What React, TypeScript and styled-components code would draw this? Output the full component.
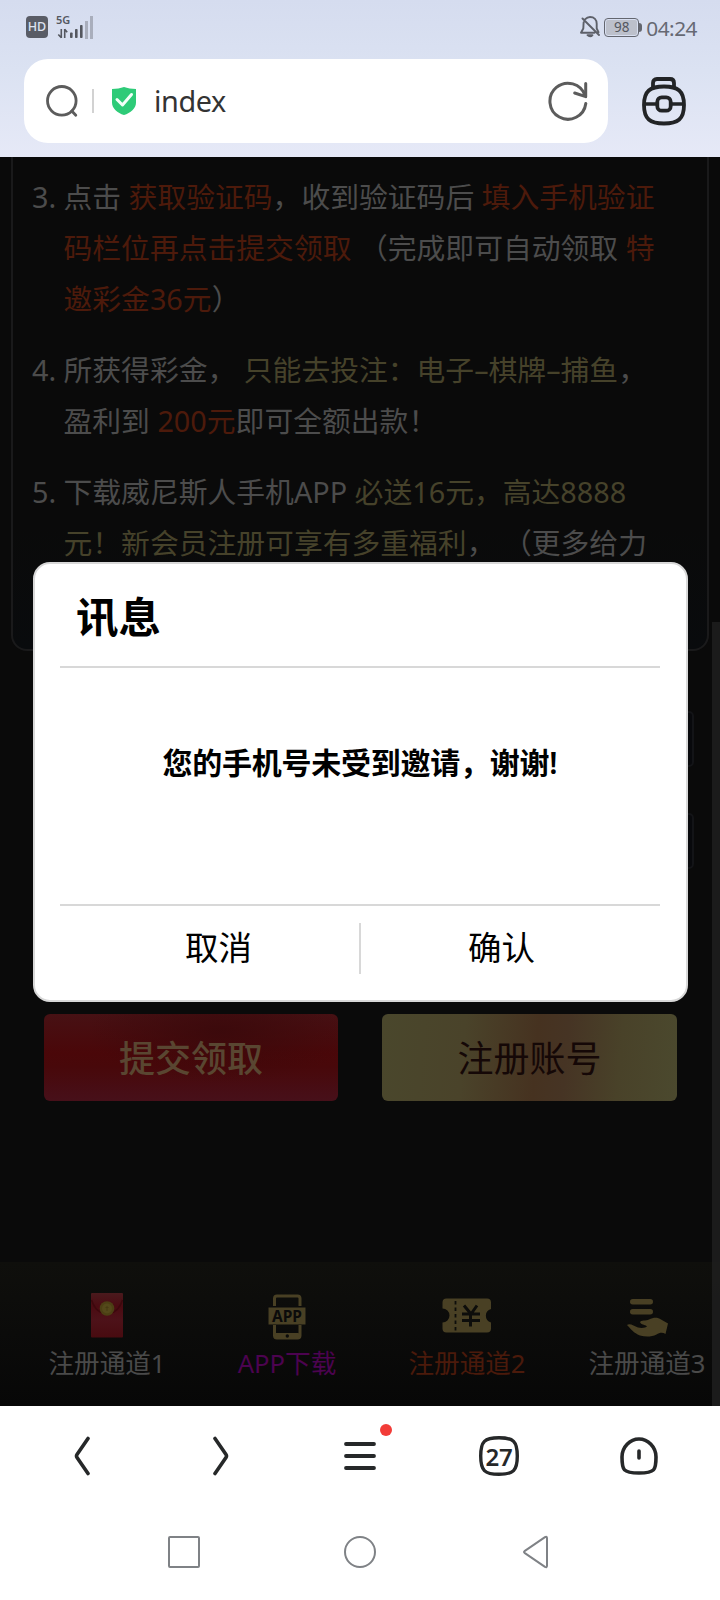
import React from "react";
import styled, { createGlobalStyle } from "styled-components";

const GlobalStyle = createGlobalStyle`
  * { box-sizing: border-box; }
  body {
    margin: 0;
    background: #fff;
    font-family: "Noto Sans", "Noto Sans CJK SC", sans-serif;
  }
  svg { display: block; flex: none; }
`;

const Phone = styled.div`
  position: relative;
  width: 720px;
  height: 1600px;
  overflow: hidden;
  display: flex;
  flex-direction: column;
  background: #fff;
`;

/* ---------- browser header ---------- */
const Header = styled.header`
  height: 157px;
  flex: none;
  background: linear-gradient(#d5dcef, #dbe2f2 45%, #e6e9f7);
`;

const StatusBar = styled.div`
  height: 59px;
  display: flex;
  align-items: center;
  justify-content: space-between;
  padding: 0 23px 5px 26px;
`;

const StatusGroup = styled.div<{ $gap: number }>`
  display: flex;
  align-items: center;
  gap: ${(p) => p.$gap}px;
`;

const HdBadge = styled.span`
  width: 22px;
  height: 22px;
  border-radius: 4px;
  background: #595c66;
  color: #dde3f2;
  font: 500 12.5px/22px "Noto Sans", sans-serif;
  text-align: center;
`;

const Signal = styled.div`
  display: flex;
  flex-direction: column;
  width: 38px;
  height: 25px;
`;

const SignalLabel = styled.span`
  font: 600 11px/10px "Noto Sans", sans-serif;
  color: #54575f;
  height: 10px;
`;

const Battery = styled.div`
  display: flex;
  align-items: center;
`;

const BatteryCell = styled.span`
  width: 35px;
  height: 19px;
  padding: 1px;
  border: 1.5px solid #63666f;
  border-radius: 4px;
  display: flex;
`;

const BatteryLevel = styled.span`
  flex: 1;
  border-radius: 2px;
  background: #bcc0cb;
  color: #54575f;
  font: 400 13.5px/14px "Noto Sans", sans-serif;
  text-align: center;
`;

const BatteryTip = styled.span`
  width: 3px;
  height: 9px;
  border-radius: 0 3px 3px 0;
  background: #63666f;
`;

const Clock = styled.span`
  font-size: 20.8px;
  letter-spacing: -0.5px;
  line-height: 24px;
  padding-top: 2px;
  color: #666973;
`;

const AddressRow = styled.div`
  display: flex;
  align-items: center;
  padding-left: 24px;
`;

const AddressBar = styled.div`
  width: 584px;
  height: 84px;
  border-radius: 24px;
  background: #fff;
  display: flex;
  align-items: center;
  padding: 0 19px 0 21px;
`;

const Separator = styled.span`
  width: 2px;
  height: 24px;
  margin: 0 17px 0 14px;
  background: #d2d2d2;
`;

const PageTitle = styled.span`
  flex: 1;
  margin-left: 17px;
  font-size: 28.8px;
  letter-spacing: -0.4px;
  line-height: 40px;
  color: #333;
`;

const BagButton = styled.button`
  margin-left: 33px;
  padding: 0;
  border: 0;
  background: none;
`;

/* ---------- dimmed page ---------- */
const Page = styled.main`
  position: relative;
  height: 1249px;
  flex: none;
  overflow: hidden;
  display: flex;
  flex-direction: column;
  background: #0a0a0a;
`;

const RulesCard = styled.section`
  height: 494px;
  flex: none;
  margin: 0 11px;
  padding: 14px 19px 0 19px;
  border: 2px solid #1a1a1b;
  border-top: 0;
  border-radius: 0 0 16px 16px;
  background: linear-gradient(#0a0a0a 75%, #090b0d);
`;

const Rule = styled.div`
  display: flex;
  margin-bottom: 20px;
  font-size: 28.8px;
  line-height: 51px;
  color: #4c4c4c;
  white-space: nowrap;
`;

const RuleNumber = styled.span`
  width: 31.5px;
  flex: none;
`;

const RuleLine = styled.div`
  height: 51px;
  white-space: pre;
`;

const Red = styled.span`
  color: #4d1a0b;
`;

const Khaki = styled.span`
  color: #46422a;
`;

const Field = styled.div`
  height: 56px;
  flex: none;
  margin: 60px 26px 0 200px;
  border: 2px solid #131417;
  border-radius: 5px;
  background: #08090c;

  & + & { margin-top: 46px; }
`;

const ActionRow = styled.div`
  display: flex;
  gap: 44px;
  margin: 145px 0 0 44px;
`;

const ActionButton = styled.button<{ $tone: "red" | "gold" }>`
  width: ${(p) => (p.$tone === "red" ? 294 : 295)}px;
  height: 87px;
  padding: 0;
  border: 0;
  border-radius: 6px;
  font-family: inherit;
  font-size: 36px;
  font-weight: ${(p) => (p.$tone === "red" ? 500 : 400)};
  line-height: 89px;
  color: ${(p) => (p.$tone === "red" ? "#594631" : "#150807")};
  background: ${(p) =>
    p.$tone === "red"
      ? "radial-gradient(ellipse 45% 60% at 60% 20%, rgba(58,9,11,.9), rgba(58,9,11,0)), linear-gradient(#471114, #4a0709 45%, #48080a 60%, #47101a)"
      : "linear-gradient(95deg, #4a472c 0%, #4a432a 28%, #463220 52%, #463424 62%, #494229 80%, #4b492e 100%)"};
`;

const TabBar = styled.nav`
  height: 144px;
  width: 720px;
  flex: none;
  margin-top: auto;
  padding-left: 17px;
  display: flex;
  background: linear-gradient(#0f0f0c, #0b0b0a 50%, #070707);
`;

const Tab = styled.div<{ $color: string }>`
  width: 180px;
  flex: none;
  display: flex;
  flex-direction: column;
  align-items: center;
  padding-top: 29px;
  font-size: 25.6px;
  line-height: 36px;
  color: ${(p) => p.$color};
  white-space: nowrap;
`;

const TabIcon = styled.span`
  height: 50px;
  margin-bottom: 5px;
`;

const ScrollThumb = styled.div`
  position: absolute;
  right: 0;
  top: 465px;
  width: 8px;
  height: 784px;
  background: rgba(30, 30, 30, 0.85);
`;

/* ---------- dialog ---------- */
const Dialog = styled.div`
  position: absolute;
  left: 33px;
  top: 562px;
  width: 655px;
  height: 440px;
  padding: 0 26px 0 25px;
  border: 2px solid #d8d8d8;
  border-radius: 17px;
  background: #fff;
  color: #000;
  display: flex;
  flex-direction: column;
`;

const DialogTitle = styled.h2`
  margin: 0;
  height: 104px;
  padding: 0 16px;
  border-bottom: 2px solid #d8d8d8;
  font-size: 42.5px;
  font-weight: 600;
  line-height: 106px;
`;

const DialogMessage = styled.p`
  margin: 0;
  height: 238px;
  border-bottom: 2px solid #d8d8d8;
  padding-top: 70px;
  font-size: 30px;
  font-weight: 600;
  line-height: 50px;
  letter-spacing: -0.25px;
  text-align: center;
`;

const DialogActions = styled.div`
  display: flex;
  align-items: center;
  height: 85px;
  padding: 0 18px;
`;

const DialogButton = styled.button`
  flex: 1;
  padding: 0 0 3px;
  border: 0;
  background: none;
  color: #000;
  font-family: inherit;
  font-size: 33.5px;
  line-height: 50px;
`;

const DialogDivider = styled.span`
  width: 2px;
  height: 51px;
  background: #d8d8d8;
`;

/* ---------- bottom bars ---------- */
const Toolbar = styled.nav`
  height: 100px;
  flex: none;
  display: flex;
  align-items: center;
  justify-content: center;
`;

const ToolButton = styled.span`
  position: relative;
  width: 139px;
  height: 100px;
  display: flex;
  align-items: center;
  justify-content: center;
`;

const AlertDot = styled.span`
  position: absolute;
  left: 89px;
  top: 18px;
  width: 12px;
  height: 12px;
  border-radius: 50%;
  background: #f23c38;
`;

const TabCount = styled.span`
  position: absolute;
  inset: 0;
  font-size: 24px;
  font-weight: 600;
  line-height: 102px;
  letter-spacing: -0.3px;
  text-align: center;
  color: #262829;
`;

const SystemNav = styled.nav`
  height: 94px;
  display: flex;
  justify-content: center;
  padding-top: 29px;
`;

const SystemKey = styled.span`
  width: 176px;
  display: flex;
  justify-content: center;
`;

const INK = "#262829";
const GOLD = "#494024";

const SignalBars = () => (
  <svg width="38" height="14" viewBox="0 0 38 14">
    <g stroke="#54575f" strokeWidth="1.6" fill="none">
      <path d="M5.3 4v9M2.3 9.5l3 3.2M8.7 13V4M8.7 4.2l2.5 3" />
    </g>
    <g fill="#54575f">
      <rect x="14" y="7.500" width="2.600" height="5.500" rx=".8" />
      <rect x="19" y="4" width="2.600" height="9" rx=".8" />
      <rect x="24" y="0" width="2.600" height="13" rx=".8" />
    </g>
  </svg>
);

const FaintBars = styled.span`
  align-self: flex-end;
  width: 8px;
  height: 23px;
  margin: 0 0 1px -17px;
  display: flex;
  align-items: flex-end;
  justify-content: space-between;

  i { width: 2.6px; background: #a9aebc; }
  i:first-child { height: 18px; }
  i:last-child { height: 23px; }
`;

const MutedBell = () => (
  <svg width="20" height="22" viewBox="0 0 20 22" fill="none" stroke="#5d6069" strokeWidth="1.9" strokeLinecap="round" strokeLinejoin="round">
    <path d="M5.300 3.200C7 1.300 8.500 1 10 1c4.200 0 6.700 2.900 6.700 6.800v4.700l1.800 3.700M3.700 6.200c-.3 2-.2 4.300-.4 6.300L1 16.700h13.500M2.500 2.500l16.500 16.500" />
    <path d="M7.500 19.200c1.600 1.600 3.600 1.600 5 0z" fill="#5d6069" />
  </svg>
);

const SearchIcon = () => (
  <svg width="33" height="34" viewBox="0 0 33 34" fill="none" stroke="#5c5c5c" strokeWidth="2.800" strokeLinecap="round">
    <circle cx="16.800" cy="16.800" r="14.300" />
    <path d="M26.800 27l4 4.300" />
  </svg>
);

const ShieldIcon = () => (
  <svg width="26" height="30" viewBox="0 0 26 30">
    <path d="M13 1c3.500 1.300 7.500 1.800 12 2v13.500C25 22.500 19.500 27 13 29 6.500 27 1 22.500 1 16.500V3c4.500-.2 8.500-.7 12-2z" fill="#2ecb78" />
    <path d="M6 13.500l5.500 5.500 9-10.500" fill="none" stroke="#f3fff8" strokeWidth="3" strokeLinecap="round" strokeLinejoin="round" />
  </svg>
);

const ReloadIcon = () => (
  <svg width="42" height="42" viewBox="0 0 42 42" fill="none" stroke="#5c5c5c" strokeWidth="3" strokeLinecap="round" strokeLinejoin="round">
    <path d="M38.800 23.500A18 18 0 1 1 38 15.500" />
    <path d="M38.700 3.500v13.200l-11-3.700" />
  </svg>
);

const BagIcon = () => (
  <svg width="46" height="50" viewBox="0 0 46 50" fill="none" stroke="#222426" strokeWidth="3.800">
    <path d="M12 12V7q0-4 4-4h13q4 0 4 4v5" />
    <path d="M23 10.500c14 0 20 4.500 20 18.500S37 47.500 23 47.500 3 43 3 29 9 10.500 23 10.500z" />
    <rect x="16.300" y="21.300" width="13.400" height="13.400" rx="4.500" />
    <path d="M3 28h13M30 28h13" strokeWidth="3.500" />
  </svg>
);

const EnvelopeIcon = () => (
  <svg width="34" height="50" viewBox="0 0 34 50">
    <defs>
      <linearGradient id="env" x1="0" y1="0" x2="0" y2="1">
        <stop offset="0" stopColor="#4a1a1d" />
        <stop offset=".3" stopColor="#4b0b12" />
        <stop offset=".6" stopColor="#4d1219" />
        <stop offset="1" stopColor="#480b10" />
      </linearGradient>
    </defs>
    <rect x="1" y="2" width="32" height="44.500" rx="1" fill="url(#env)" />
    <path d="M1.500 9c3 9 8 13.500 15.500 13.500S29.500 18 32.500 9" fill="none" stroke="#3d080d" strokeWidth="1.600" />
    <circle cx="17" cy="17.500" r="7.300" fill="#4c3f14" />
    <circle cx="17" cy="17.500" r="5" fill="#54491a" />
    <path d="M17 15v5M15.500 16.500h3" stroke="#463b12" strokeWidth="1" />
  </svg>
);

const PhoneAppIcon = () => (
  <svg width="38" height="50" viewBox="0 0 38 50">
    <rect x="6.500" y="5" width="25.500" height="42" rx="2.500" fill="none" stroke={GOLD} strokeWidth="3" />
    <rect x="6" y="42" width="26" height="6" rx="2" fill={GOLD} />
    <circle cx="19.300" cy="45" r="1.700" fill="#0b0b0b" />
    <rect x="0" y="15" width="38" height="19" fill="#0b0b0b" />
    <rect x=".5" y="16.500" width="37" height="17" fill={GOLD} />
    <text x="19" y="30.500" textAnchor="middle" fontFamily="Noto Sans" fontWeight="700" fontSize="15.500" fill="#0b0b0b">APP</text>
  </svg>
);

const CouponIcon = () => (
  <svg width="50" height="50" viewBox="0 0 50 50">
    <path d="M4.500 7.500h40.500q4 0 4 4v6.500a7 7 0 0 0 0 13.500v6q0 4-4 4H4.500q-4 0-4-4v-6a7 7 0 0 0 0-14v-6q0-4 4-4z" fill={GOLD} />
    <path d="M13.500 10v31" stroke="#0d0d0b" strokeWidth="1.800" strokeDasharray="3.500 3" />
    <path d="M22 14.500l7 8.500 6-8.500M28.500 23v12.500M20 23h18M20 29.500h18" fill="none" stroke="#0d0d0b" strokeWidth="3" />
  </svg>
);

const HandIcon = () => (
  <svg width="44" height="50" viewBox="0 0 44 50" fill={GOLD}>
    <rect x="5" y="8" width="23" height="5.500" rx="2.700" />
    <rect x="5" y="18" width="23" height="5.500" rx="2.700" />
    <path d="M2 34c3-2 7 1 11 2.500 4 .8 8 .3 9-1.300-2-1.800-6-1-7-4.200 1-2 6-1 9-2.500 5-2.500 9-2 12 0l7 4-2.500 10.500c-3-2-6-1.300-9 .5-5 2.500-11 2.500-16.500 1C8.500 42 6 38 2 34z" />
  </svg>
);

const RULES = [
  {
    n: "3.",
    lines: [
      <>点击 <Red>获取验证码</Red>，收到验证码后 <Red>填入手机验证</Red></>,
      <><Red>码栏位再点击提交领取</Red> （完成即可自动领取 <Red>特</Red></>,
      <><Red>邀彩金36元</Red>）</>,
    ],
  },
  {
    n: "4.",
    lines: [
      <>所获得彩金， <Khaki>只能去投注：电子–棋牌–捕鱼</Khaki>，</>,
      <>盈利到 <Red>200元</Red>即可全额出款！</>,
    ],
  },
  {
    n: "5.",
    lines: [
      <>下载威尼斯人手机APP <Khaki>必送16元，高达8888</Khaki></>,
      <><Khaki>元！新会员注册可享有多重福利</Khaki>， （更多给力</>,
    ],
  },
];

const TABS = [
  { label: "注册通道1", color: "#4a4a4a", icon: <EnvelopeIcon /> },
  { label: "APP下载", color: "#4c0350", icon: <PhoneAppIcon /> },
  { label: "注册通道2", color: "#4b1a0b", icon: <CouponIcon /> },
  { label: "注册通道3", color: "#4a4a4a", icon: <HandIcon /> },
];

export default function App() {
  return (
    <>
      <GlobalStyle />
      <Phone>
        <Header>
          <StatusBar>
            <StatusGroup $gap={8}>
              <HdBadge>HD</HdBadge>
              <Signal>
                <SignalLabel>5G</SignalLabel>
                <SignalBars />
              </Signal>
              <FaintBars><i /><i /></FaintBars>
            </StatusGroup>
            <StatusGroup $gap={4}>
              <MutedBell />
              <Battery>
                <BatteryCell><BatteryLevel>98</BatteryLevel></BatteryCell>
                <BatteryTip />
              </Battery>
              <Clock>04:24</Clock>
            </StatusGroup>
          </StatusBar>
          <AddressRow>
            <AddressBar>
              <SearchIcon />
              <Separator />
              <ShieldIcon />
              <PageTitle>index</PageTitle>
              <ReloadIcon />
            </AddressBar>
            <BagButton><BagIcon /></BagButton>
          </AddressRow>
        </Header>

        <Page>
          <RulesCard>
            {RULES.map((rule) => (
              <Rule key={rule.n}>
                <RuleNumber>{rule.n}</RuleNumber>
                <div>
                  {rule.lines.map((line, i) => (
                    <RuleLine key={i}>{line}</RuleLine>
                  ))}
                </div>
              </Rule>
            ))}
          </RulesCard>
          <Field />
          <Field />
          <ActionRow>
            <ActionButton $tone="red">提交领取</ActionButton>
            <ActionButton $tone="gold">注册账号</ActionButton>
          </ActionRow>
          <TabBar>
            {TABS.map((tab) => (
              <Tab key={tab.label} $color={tab.color}>
                <TabIcon>{tab.icon}</TabIcon>
                {tab.label}
              </Tab>
            ))}
          </TabBar>
          <ScrollThumb />
        </Page>

        <Toolbar>
          <ToolButton>
            <svg width="18" height="40" viewBox="0 0 18 40" fill="none" stroke={INK} strokeWidth="3.600" strokeLinecap="round" strokeLinejoin="round">
              <path d="M15 2.500L4 18.500q-1 1.500 0 3L15 37.500" />
            </svg>
          </ToolButton>
          <ToolButton>
            <svg width="18" height="40" viewBox="0 0 18 40" fill="none" stroke={INK} strokeWidth="3.600" strokeLinecap="round" strokeLinejoin="round">
              <path d="M3 2.500L14 18.500q1 1.500 0 3L3 37.500" />
            </svg>
          </ToolButton>
          <ToolButton>
            <svg width="32" height="28" viewBox="0 0 32 28" stroke={INK} strokeWidth="3.800" strokeLinecap="round">
              <path d="M2 2h28M2 14h28M2 26h28" />
            </svg>
            <AlertDot />
          </ToolButton>
          <ToolButton>
            <svg width="40" height="40" viewBox="0 0 40 40" fill="none" stroke={INK} strokeWidth="3.400">
              <path d="M20 1.700c14.500 0 18.300 3.800 18.300 18.300S34.500 38.300 20 38.300 1.700 34.500 1.700 20 5.500 1.700 20 1.700z" />
            </svg>
            <TabCount>27</TabCount>
          </ToolButton>
          <ToolButton>
            <svg width="40" height="38" viewBox="-2 0 40 38" fill="none" stroke={INK} strokeWidth="3.600" strokeLinecap="round">
              <path d="M19 2C10 2 2 10 2 20c0 13 1 16 17 16s17-3 17-16C36 10 28 2 19 2z" />
              <path d="M19 14v7" />
            </svg>
          </ToolButton>
        </Toolbar>

        <SystemNav>
          <SystemKey>
            <svg width="34" height="34" viewBox="0 0 34 34" fill="none" stroke="#7f8286" strokeWidth="2">
              <rect x="2" y="2" width="30" height="30" rx="1" />
            </svg>
          </SystemKey>
          <SystemKey>
            <svg width="34" height="34" viewBox="0 0 34 34" fill="none" stroke="#7f8286" strokeWidth="2">
              <circle cx="17" cy="17" r="15" />
            </svg>
          </SystemKey>
          <SystemKey>
            <svg width="34" height="34" viewBox="0 0 34 34" fill="none" stroke="#7f8286" strokeWidth="2" strokeLinejoin="round">
              <path d="M5.500 16.200L26 2.200q2-1 2 1v27.600q0 2-2 1L5.500 17.800q-1-.8 0-1.600z" />
            </svg>
          </SystemKey>
        </SystemNav>

        <Dialog role="dialog">
          <DialogTitle>讯息</DialogTitle>
          <DialogMessage>您的手机号未受到邀请，谢谢!</DialogMessage>
          <DialogActions>
            <DialogButton>取消</DialogButton>
            <DialogDivider />
            <DialogButton>确认</DialogButton>
          </DialogActions>
        </Dialog>
      </Phone>
    </>
  );
}
